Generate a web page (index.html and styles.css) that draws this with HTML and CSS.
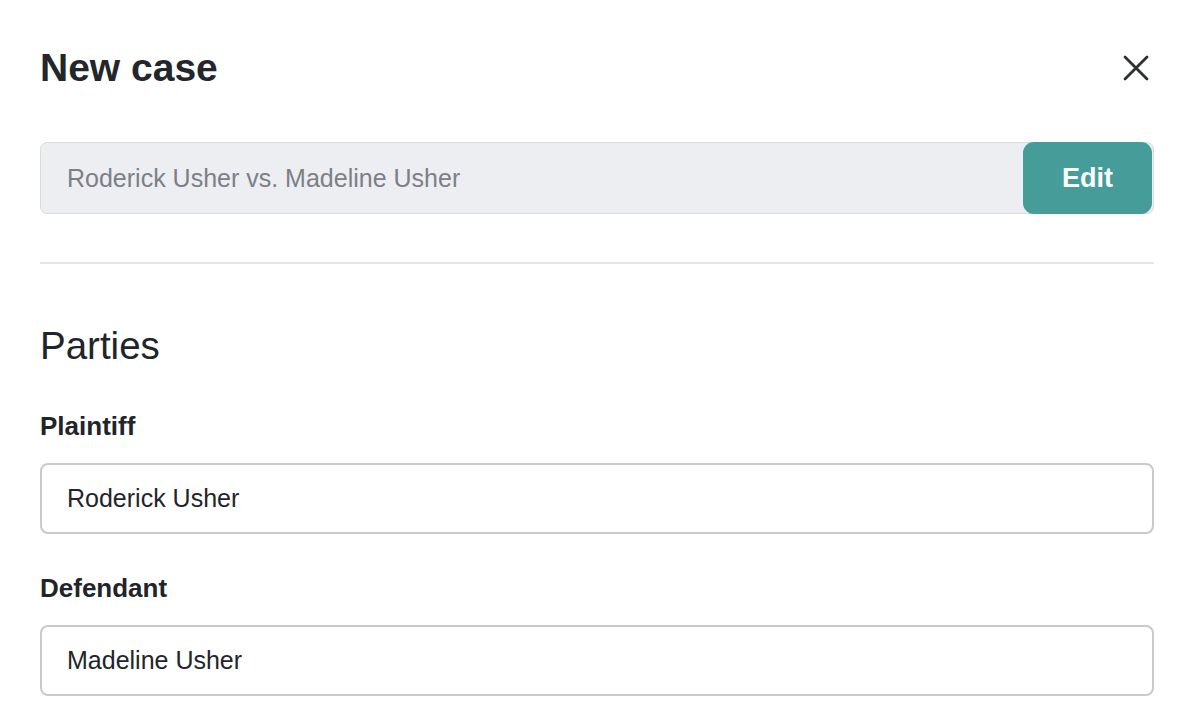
FILE: index.html
```html
<!DOCTYPE html>
<html>
<head>
<meta charset="utf-8">
<link rel="stylesheet" href="styles.css">
</head>
<body>
<div class="modal">
  <div class="header">
    <h1 class="title">New case</h1>
    <button class="close" aria-label="Close">
      <svg width="26" height="26" viewBox="0 0 26 26"><path d="M2 2L24 24M24 2L2 24" stroke="#2b3035" stroke-width="2.8" stroke-linecap="round" fill="none"/></svg>
    </button>
  </div>
  <div class="case-name">
    <span class="case-text">Roderick Usher vs. Madeline Usher</span>
    <button class="edit">Edit</button>
  </div>
  <hr class="divider">
  <h2 class="section">Parties</h2>
  <div class="field">
    <label class="label">Plaintiff</label>
    <div class="input">Roderick Usher</div>
  </div>
  <div class="field">
    <label class="label">Defendant</label>
    <div class="input">Madeline Usher</div>
  </div>
</div>
</body>
</html>
```

FILE: styles.css
```css
html, body {
  margin: 0;
  padding: 0;
  background: #ffffff;
}
body {
  font-family: "Liberation Sans", Arial, sans-serif;
  color: #212529;
}
.modal {
  padding: 0 36px 0 40px;
  display: flex;
  flex-direction: column;
}
.header {
  display: flex;
  justify-content: space-between;
  align-items: center;
  height: 142px;
  padding-bottom: 7px;
  box-sizing: border-box;
}
.title {
  margin: 0;
  font-size: 39px;
  font-weight: 700;
  color: #23272b;
  line-height: 1;
}
.close {
  background: none;
  border: none;
  padding: 0;
  margin-right: 5px;
  width: 26px;
  height: 26px;
  display: flex;
}
.case-name {
  display: flex;
  align-items: stretch;
  height: 72px;
  box-sizing: border-box;
  background: #eceef2;
  border: 1px solid #d8dbe0;
  border-radius: 7px;
}
.case-text {
  flex: 1;
  display: flex;
  align-items: center;
  padding-left: 26px;
  font-size: 25px;
  color: #7c8086;
}
.edit {
  width: 129px;
  margin: -1px 1px -1px 0;
  background: #459c98;
  border: none;
  border-radius: 11px;
  color: #ffffff;
  font-family: "Liberation Sans", Arial, sans-serif;
  font-size: 27px;
  font-weight: 700;
}
.divider {
  margin: 48px 0 0 0;
  border: none;
  border-top: 2px solid #e3e5e8;
}
.section {
  margin: 63px 0 0 0;
  font-size: 38.5px;
  font-weight: 400;
  line-height: 1;
  color: #212529;
}
.field {
  display: flex;
  flex-direction: column;
}
.label {
  margin-top: 47px;
  font-size: 26px;
  font-weight: 700;
  line-height: 1;
  color: #212529;
}
.field + .field .label {
  margin-top: 41px;
}
.input {
  margin-top: 24px;
  height: 71px;
  box-sizing: border-box;
  border: 2px solid #c7cacf;
  border-radius: 8px;
  display: flex;
  align-items: center;
  padding-left: 25px;
  font-size: 25px;
  color: #212529;
}
```
